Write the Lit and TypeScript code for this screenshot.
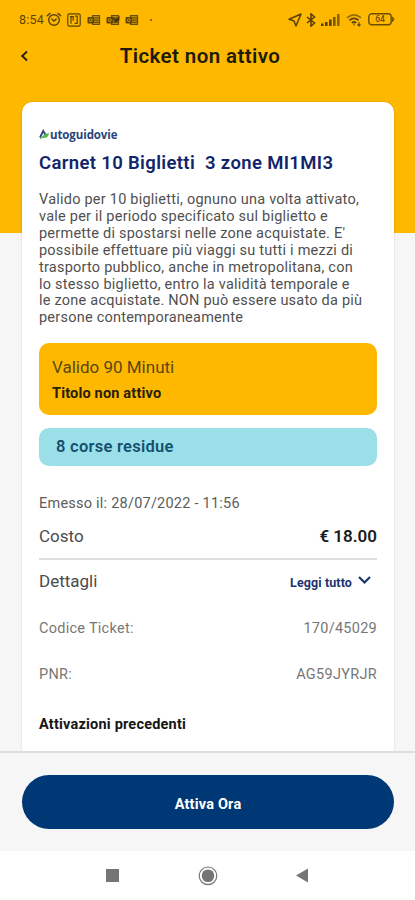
import { LitElement, html, css, svg } from "lit";
import { customElement } from "lit/decorators.js";

const mailIcon = (dot: boolean) => html`<svg class="mail" width="14" height="12" viewBox="0 0 14 12">
  <path d="M5.5 1.5h7v9h-7z" fill="#b98909" stroke="#6b4d08" stroke-width="1.2"/>
  <path d="M6.5 4h6M6.5 6.2h6M6.5 8.4h6" stroke="#6b4d08" stroke-width="1"/>
  <rect x="0.5" y="3" width="6.5" height="6.5" rx="1" fill="#604506"/>
  <circle cx="3.8" cy="6.2" r="1.4" fill="none" stroke="#d99c04" stroke-width=".9"/>
  ${dot ? svg`<path d="M5.5 2l4 3.2 4-3.2v4L9.5 9z" fill="#4a3504"/>` : ""}
</svg>`;

@customElement("status-bar")
export class StatusBar extends LitElement {
  static styles = css`
    :host { display: flex; justify-content: space-between; height: 38px; box-sizing: border-box;
      padding: 11px 20px 0 19px; color: #5b4308; font: 12.5px/17px Roboto, sans-serif; }
    .side { display: flex; height: 17px; align-items: center; }
    .time { letter-spacing: 0.2px; width: 26px; white-space: nowrap; }
    .alarm { margin-left: 1px; }
    .nfc { margin-left: 5px; }
    .mail { margin-left: 6px; }
    .mail + .mail { margin-left: 5px; }
    .dot { width: 2px; height: 2px; border-radius: 1px; background: #6b4d08; margin-left: 11px; }
    .bt { margin-left: 4px; }
    .signal { margin-left: 5px; }
    .wifi { margin-left: 6px; }
    .battery { margin-left: 5px; }
    svg text { font: 500 8.5px Roboto, sans-serif; }
  `;
  render() {
    return html`
      <div class="side">
        <span class="time">8:54</span>
        <svg class="alarm" width="16" height="15" viewBox="0 0 16 15" fill="none" stroke="#5b4308" stroke-width="1.4" stroke-linecap="round">
          <circle cx="8" cy="8" r="5.3"/><path d="M1.2 3.8L4 1.4M14.8 3.8L12 1.4M5.8 7l2.2 2 2.2-2"/>
        </svg>
        <svg class="nfc" width="14" height="14" viewBox="0 0 14 14" fill="none" stroke="#5b4308" stroke-width="1.2">
          <rect x="0.8" y="0.8" width="12.4" height="12.4" rx="1.6"/>
          <path d="M3 3.6h3.2v4.2M4 4v6.8M7.6 10.4h2.6V3.2H8"/>
        </svg>
        ${mailIcon(false)}${mailIcon(true)}${mailIcon(false)}
        <span class="dot"></span>
      </div>
      <div class="side">
        <svg width="14" height="14" viewBox="0 0 14 14" fill="none" stroke="#5b4308" stroke-width="1.5" stroke-linejoin="round">
          <path d="M13 1L1 6.2l5 1.8 2 5z"/>
        </svg>
        <svg class="bt" width="10" height="14" viewBox="0 0 10 14" fill="none" stroke="#5b4308" stroke-width="1.6">
          <path d="M1 4l7.5 6L5 13V1l3.5 3L1 10"/>
        </svg>
        <svg class="signal" width="19" height="12" viewBox="0 0 19 12" fill="#5b4308">
          <rect x="0" y="9.5" width="2.6" height="2.5"/><rect x="4" y="8" width="2.6" height="4"/>
          <rect x="8" y="5.5" width="2.6" height="6.5"/><rect x="12" y="3" width="2.6" height="9" opacity=".8"/>
          <rect x="16" y="0" width="2.6" height="12" opacity=".7"/>
        </svg>
        <svg class="wifi" width="17" height="14" viewBox="0 0 17 14" fill="none" stroke="#5b4308" stroke-width="1.6">
          <path d="M1 4.8Q8 -1.2 15 4.8" opacity=".65"/><path d="M3.4 7.4Q8 3.4 12.6 7.4"/><path d="M5.8 9.8Q8 8 10.2 9.8"/>
          <path d="M8 10.3v2.2M13 9v4M11.5 11.5l1.5 1.5 1.5-1.5" stroke-width="1.1"/>
        </svg>
        <svg class="battery" width="27" height="13" viewBox="0 0 27 13" fill="none" stroke="#6b4d08" stroke-width="1.4">
          <rect x="0.8" y="0.8" width="22.4" height="11" rx="3"/><path d="M24.4 3.8l1.6 2.5-1.6 2.5z" fill="#6b4d08" stroke-width=".8"/>
          <text x="12" y="9.4" text-anchor="middle" fill="#6b4d08" stroke="none">64</text>
        </svg>
      </div>`;
  }
}

@customElement("app-root")
export class AppRoot extends LitElement {
  static styles = css`
    :host { display: flex; flex-direction: column; width: 415px; height: 900px; overflow: hidden;
      font-family: Roboto, sans-serif; background: #fff; color: #4b4b4b; }
    .screen { height: 751px; box-sizing: border-box; overflow: hidden; display: flex; flex-direction: column;
      background: linear-gradient(#ffb800 233px, #f6f6f6 233px); }
    .appbar { display: grid; grid-template-columns: 50px 1fr 65px; align-items: center; height: 36px; flex: none; }
    .back { margin-left: 20px; }
    .title { font-size: 20.5px; font-weight: 600; line-height: 36px; text-align: center; color: #1e1a0c;
      white-space: nowrap; letter-spacing: 0.4px; }
    .card { margin: 28px 21px 0 22px; flex: 1; background: #fff; border-radius: 10px 10px 0 0; padding: 25px 17px 0;
      box-shadow: 0 0 2px rgba(0,0,0,.18); display: flex; flex-direction: column; }
    .logo { display: flex; align-items: center; height: 16px; color: #29457c; font: 700 11.5px/16px "Open Sans", sans-serif; letter-spacing: -.1px; }
    .logo svg { margin-right: -1px; }
    .name { margin-top: 9px; font-size: 18.5px; line-height: 22px; font-weight: 600; color: #12246a; white-space: pre; letter-spacing: .35px; }
    .desc { margin-top: 18px; font-size: 14.5px; line-height: 16.9px; white-space: pre; color: #505050; letter-spacing: .23px; }
    .desc span { display: block; }
    .valid { margin-top: 16px; height: 72px; box-sizing: border-box; border-radius: 10px; background: #ffb800; padding: 13px; }
    .valid .a { font-size: 17px; line-height: 22px; color: #594818; }
    .valid .b { font-size: 14.5px; line-height: 20px; margin-top: 6px; font-weight: 700; color: #2a2008; letter-spacing: .18px; }
    .rides { margin-top: 13px; height: 38px; border-radius: 10px; background: #9be0e9; padding-left: 17px;
      font-size: 16.5px; line-height: 38px; font-weight: 600; color: #14506f; letter-spacing: .27px; }
    .row { display: flex; justify-content: space-between; align-items: center; white-space: nowrap; }
    .issued { margin-top: 28px; font-size: 14.5px; line-height: 20px; color: #5c5c5c; letter-spacing: .23px; }
    .cost { margin-top: 10px; height: 24px; font-size: 17px; }
    .price { font-weight: 600; color: #1c1c1c; }
    .line { margin-top: 10px; height: 2px; background: #dedede; }
    .details { margin-top: 9px; height: 24px; font-size: 17px; }
    .more { display: flex; align-items: center; font-size: 12.5px; font-weight: 700; color: #1d346f; padding-right: 6px; gap: 6px; letter-spacing: .1px; }
    .more span { padding-top: 2px; }
    .code { margin-top: 25px; height: 20px; font-size: 14.5px; color: #777; letter-spacing: .27px; }
    .pnr { margin-top: 26px; height: 20px; font-size: 14.5px; color: #777; letter-spacing: .3px; }
    .prev { margin-top: 31px; font-size: 14.5px; line-height: 20px; font-weight: 700; color: #161616; letter-spacing: .2px; }
    .foot { height: 100px; box-sizing: border-box; background: #f6f6f6; border-top: 2px solid #dedede; padding: 22px 21px 0 22px; }
    .btn { display: block; width: 100%; height: 54px; border: 0; border-radius: 27px; background: #003876; color: #fff; padding: 4px 0 0;
      font: 700 14.5px Roboto, sans-serif; letter-spacing: .2px; }
    .nav { flex: 1; display: flex; }
    .nav svg { display: block; }
  `;
  render() {
    return html`
      <div class="screen">
        <status-bar></status-bar>
        <div class="appbar">
          <svg class="back" width="10" height="12" viewBox="0 0 10 12" fill="none" stroke="#2a2008" stroke-width="1.9"><path d="M7 1.5L2.2 6 7 10.5"/></svg>
          <div class="title">Ticket non attivo</div>
        </div>
        <div class="card">
          <div class="logo">
            <svg width="12" height="12" viewBox="0 0 12 12"><path d="M1 8.5L4.2 2l3 5" fill="none" stroke="#29457c" stroke-width="1.8"/><path d="M1 11Q3 5.5 10 4 9.5 9 5.5 8.7 3 8.5 1 11z" fill="#50b848"/></svg><span class="brand">utoguidovie</span>
          </div>
          <div class="name">Carnet 10 Biglietti  3 zone MI1MI3</div>
          <div class="desc"><span>Valido per 10 biglietti, ognuno una volta attivato,</span><span>vale per il periodo specificato sul biglietto e</span><span>permette di spostarsi nelle zone acquistate. E'</span><span>possibile effettuare più viaggi su tutti i mezzi di</span><span>trasporto pubblico, anche in metropolitana, con</span><span>lo stesso biglietto, entro la validità temporale e</span><span>le zone acquistate. NON può essere usato da più</span><span>persone contemporaneamente</span></div>
          <div class="valid"><div class="a">Valido 90 Minuti</div><div class="b">Titolo non attivo</div></div>
          <div class="rides">8 corse residue</div>
          <div class="issued">Emesso il: 28/07/2022 - 11:56</div>
          <div class="row cost"><span>Costo</span><span class="price">€ 18.00</span></div>
          <div class="line"></div>
          <div class="row details"><span>Dettagli</span><span class="more"><span>Leggi tutto</span><svg width="13" height="12" viewBox="0 0 13 12" fill="none" stroke="#1d346f" stroke-width="2.2"><path d="M1 2l5.5 5.5L12 2"/></svg></span></div>
          <div class="row code"><span>Codice Ticket:</span><span>170/45029</span></div>
          <div class="row pnr"><span>PNR:</span><span>AG59JYRJR</span></div>
          <div class="prev">Attivazioni precedenti</div>
        </div>
      </div>
      <div class="foot"><button class="btn">Attiva Ora</button></div>
      <div class="nav">
        <svg width="415" height="49" viewBox="0 0 415 49" fill="#757575">
          <rect x="106" y="18" width="13" height="13"/>
          <circle cx="208" cy="24.8" r="6.3"/><circle cx="208" cy="24.8" r="8.8" fill="none" stroke="#757575" stroke-width="1.2"/>
          <path d="M296 24.6l12-7v14z"/>
        </svg>
      </div>`;
  }
}
